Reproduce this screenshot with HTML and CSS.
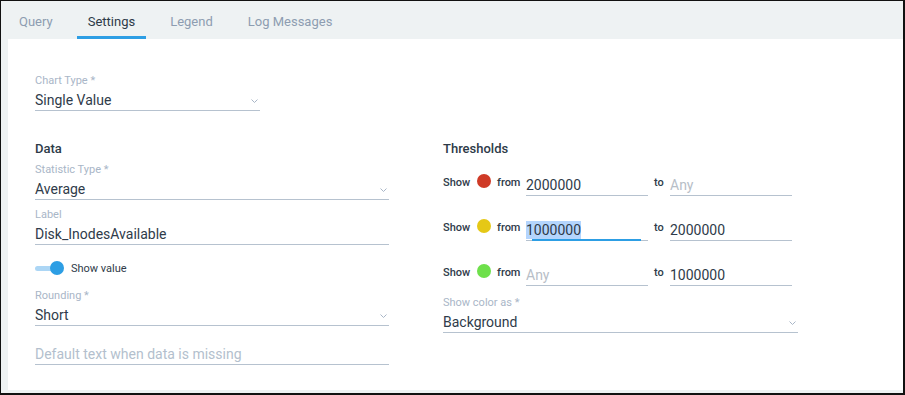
FILE: index.html
```html
<!DOCTYPE html>
<html lang="en">
<head>
    <meta charset="UTF-8">
    <title>Chart Settings</title>
    <link rel="stylesheet" href="styles.css">
</head>
<body>
    <div class="frame">
        <div class="tabs">
            <div class="tab">Query</div>
            <div class="tab active">Settings</div>
            <div class="tab">Legend</div>
            <div class="tab">Log Messages</div>
        </div>

        <div class="panel">
            <div class="field chart-type">
                <div class="field-label">Chart Type *</div>
                <div class="field-value select">Single Value
                    <svg class="chevron" width="7" height="4" viewBox="0 0 7 4"><polyline points="0.5,0.5 3.5,3.5 6.5,0.5"/></svg>
                </div>
            </div>

            <div class="columns">
                <div class="col left">
                    <div class="section-title">Data</div>
                    <div class="field">
                        <div class="field-label">Statistic Type *</div>
                        <div class="field-value select">Average
                            <svg class="chevron" width="7" height="4" viewBox="0 0 7 4"><polyline points="0.5,0.5 3.5,3.5 6.5,0.5"/></svg>
                        </div>
                    </div>
                    <div class="field gap-s">
                        <div class="field-label">Label</div>
                        <div class="field-value">Disk_InodesAvailable</div>
                    </div>
                    <div class="toggle-row">
                        <div class="toggle"><span class="track"></span><span class="knob"></span></div>
                        <span class="toggle-label">Show value</span>
                    </div>
                    <div class="field rounding">
                        <div class="field-label">Rounding *</div>
                        <div class="field-value select">Short
                            <svg class="chevron" width="7" height="4" viewBox="0 0 7 4"><polyline points="0.5,0.5 3.5,3.5 6.5,0.5"/></svg>
                        </div>
                    </div>
                    <div class="field missing">
                        <div class="field-value placeholder">Default text when data is missing</div>
                    </div>
                </div>

                <div class="col right">
                    <div class="section-title">Thresholds</div>
                    <div class="thresholds">
                        <div class="th-row">
                            <span class="th-show">Show</span>
                            <span class="dot red"></span>
                            <span class="th-from">from</span>
                            <div class="th-input">2000000</div>
                            <span class="th-to">to</span>
                            <div class="th-input empty">Any</div>
                        </div>
                        <div class="th-row">
                            <span class="th-show">Show</span>
                            <span class="dot yellow"></span>
                            <span class="th-from">from</span>
                            <div class="th-input focused"><span class="selected">1000000</span></div>
                            <span class="th-to">to</span>
                            <div class="th-input">2000000</div>
                        </div>
                        <div class="th-row">
                            <span class="th-show">Show</span>
                            <span class="dot green"></span>
                            <span class="th-from">from</span>
                            <div class="th-input empty">Any</div>
                            <span class="th-to">to</span>
                            <div class="th-input">1000000</div>
                        </div>
                    </div>
                    <div class="field color-as">
                        <div class="field-label">Show color as *</div>
                        <div class="field-value select">Background
                            <svg class="chevron" width="7" height="4" viewBox="0 0 7 4"><polyline points="0.5,0.5 3.5,3.5 6.5,0.5"/></svg>
                        </div>
                    </div>
                </div>
            </div>
        </div>
    </div>
</body>
</html>
```

FILE: styles.css
```css
body {
    margin: 0;
    font-family: Roboto, "Liberation Sans", sans-serif;
    background: #fff;
}

.frame {
    width: 905px;
    height: 395px;
    box-sizing: border-box;
    border-style: solid;
    border-color: #111;
    border-width: 1px 2px 2px 1px;
    background: #eef2f3;
    display: flex;
    flex-direction: column;
}

/* Tab bar */
.tabs {
    height: 38px;
    display: flex;
    gap: 13px;
    padding-left: 7px;
    flex-shrink: 0;
}

.tab {
    height: 38px;
    box-sizing: border-box;
    padding: 7px 11px 0;
    font-size: 13px;
    line-height: 28px;
    color: #8d9db1;
    border-bottom: 3px solid transparent;
}

.tab.active {
    color: #2d3a48;
    border-bottom-color: #2d9ee4;
}

/* Main panel */
.panel {
    flex: 1;
    background: #fff;
    margin: 0 0 3px 7px;
    padding: 35px 0 0 27px;
}

.field {
    color: #2f3b4a;
}

.field-label {
    font-size: 11px;
    line-height: 14px;
    color: #a9b6c7;
}

.field-value {
    position: relative;
    font-size: 14px;
    line-height: 20px;
    padding-top: 2px;
    border-bottom: 1px solid #b6c2cf;
}

.field-value.placeholder {
    color: #b3bfcd;
    padding-top: 4px;
    line-height: 19px;
}

.chevron {
    position: absolute;
    right: 2px;
    top: 11px;
    fill: none;
    stroke: #a9b6c7;
    stroke-width: 1;
}

.chart-type {
    width: 225px;
}

.columns {
    display: flex;
    margin-top: 30px;
}

.col.left {
    width: 354px;
    margin-right: 54px;
}

.col.right {
    width: 355px;
}

.section-title {
    font-size: 13px;
    font-weight: 500;
    line-height: 15px;
    color: #2d3a48;
    margin-bottom: 7px;
}

.gap-s {
    margin-top: 8px;
}

/* Toggle */
.toggle-row {
    display: flex;
    align-items: center;
    height: 16px;
    margin-top: 15px;
}

.toggle {
    position: relative;
    width: 29px;
    height: 14px;
}

.toggle .track {
    position: absolute;
    left: 0;
    top: 5px;
    width: 24px;
    height: 5px;
    border-radius: 3px;
    background: #acd6f5;
}

.toggle .knob {
    position: absolute;
    right: 0;
    top: 0;
    width: 14px;
    height: 14px;
    border-radius: 50%;
    background: #2d9ee4;
}

.toggle-label {
    margin-left: 7px;
    font-size: 11px;
    color: #2f3b4a;
}

.rounding {
    margin-top: 13px;
}

.missing {
    margin-top: 15px;
}

/* Thresholds */
.thresholds {
    display: flex;
    flex-direction: column;
    gap: 22px;
    margin-top: 17px;
}

.th-row {
    display: flex;
    align-items: flex-end;
    font-size: 11px;
    font-weight: 500;
    color: #2f3b4a;
}

.th-row > span {
    line-height: 14px;
    margin-bottom: 6px;
}

.th-show {
    width: 34px;
}

.dot {
    width: 14px;
    height: 14px;
    border-radius: 50%;
    margin-right: 6px;
    margin-bottom: 8px !important;
}

.dot.red { background: #cf3a26; }
.dot.yellow { background: #e5c816; }
.dot.green { background: #6ee04b; }

.th-from {
    width: 29px;
}

.th-to {
    margin-left: 6px;
    width: 16px;
}

.th-input {
    position: relative;
    width: 122px;
    font-size: 14px;
    font-weight: 400;
    line-height: 20px;
    padding-top: 2px;
    border-bottom: 1px solid #b6c2cf;
}

.th-input.empty {
    color: #b7bec7;
}

.th-input.focused::after {
    content: '';
    position: absolute;
    left: 6px;
    right: 7px;
    bottom: -1px;
    height: 2px;
    background: #2d9ee4;
}

.selected {
    background: #b4d5fd;
    padding: 1px 0;
}

.color-as {
    margin-top: 10px;
}
```
